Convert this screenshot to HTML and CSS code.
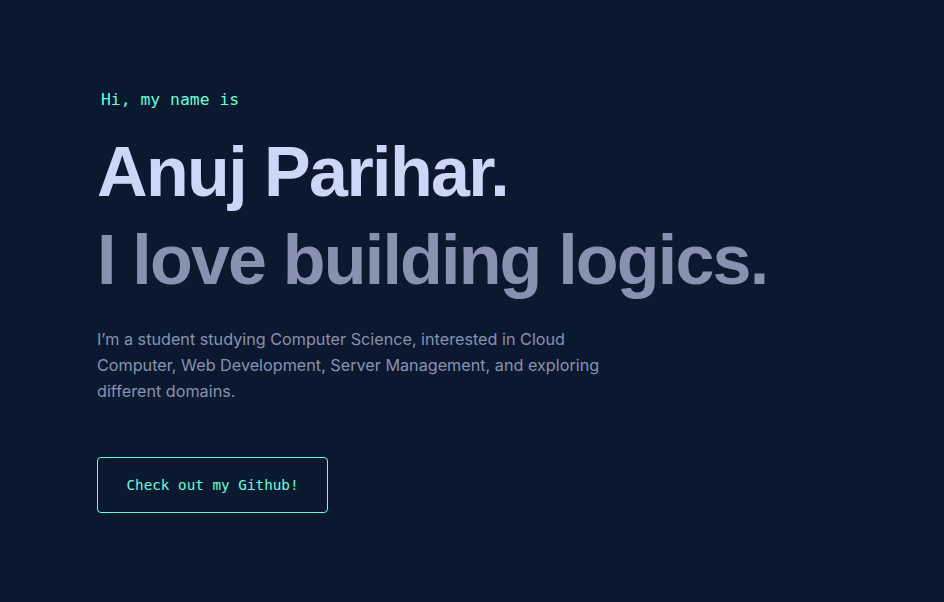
FILE: index.html
```html
<!DOCTYPE html>
<html lang="en">
<head>
<meta charset="utf-8">
<title>Anuj Parihar</title>
<link rel="stylesheet" href="styles.css">
</head>
<body>
<main class="hero">
  <h1 class="hello">Hi, my name is</h1>
  <h2 class="name">Anuj Parihar.</h2>
  <h3 class="tagline">I love building logics.</h3>
  <p class="intro">I’m a student studying Computer Science, interested in Cloud Computer, Web Development, Server Management, and exploring different domains.</p>
  <a class="btn" href="#">Check out my Github!</a>
</main>
</body>
</html>
```
FILE: styles.css
```css
html, body {
  margin: 0;
  padding: 0;
  background: #0a192f;
  height: 100%;
}
body {
  font-family: "Liberation Sans", Arial, sans-serif;
}
.hero {
  display: flex;
  flex-direction: column;
  align-items: flex-start;
  padding: 88px 0 0 97px;
}
.hello {
  margin: 0 0 19px 4px;
  font-family: "DejaVu Sans Mono", "Liberation Mono", monospace;
  font-weight: 400;
  font-size: 16.4px;
  line-height: 24px;
  color: #64ffda;
}
.name {
  margin: 0;
  font-size: 70px;
  line-height: 82px;
  font-weight: 700;
  color: #ccd6f6;
  letter-spacing: -1.6px;
}
.tagline {
  margin: 6px 0 0;
  font-size: 70px;
  line-height: 82px;
  font-weight: 700;
  color: #8892b0;
  letter-spacing: -1.8px;
}
.intro {
  margin: 25px 0 0;
  max-width: 540px;
  font-family: "Inter", sans-serif;
  font-size: 16.2px;
  line-height: 26px;
  color: #8892b0;
}
.btn {
  margin-top: 53px;
  box-sizing: border-box;
  width: 231px;
  height: 56px;
  display: flex;
  align-items: center;
  justify-content: center;
  border: 1px solid #64ffda;
  border-radius: 4px;
  font-family: "DejaVu Sans Mono", "Liberation Mono", monospace;
  font-size: 14.3px;
  color: #64ffda;
  text-decoration: none;
}
```
